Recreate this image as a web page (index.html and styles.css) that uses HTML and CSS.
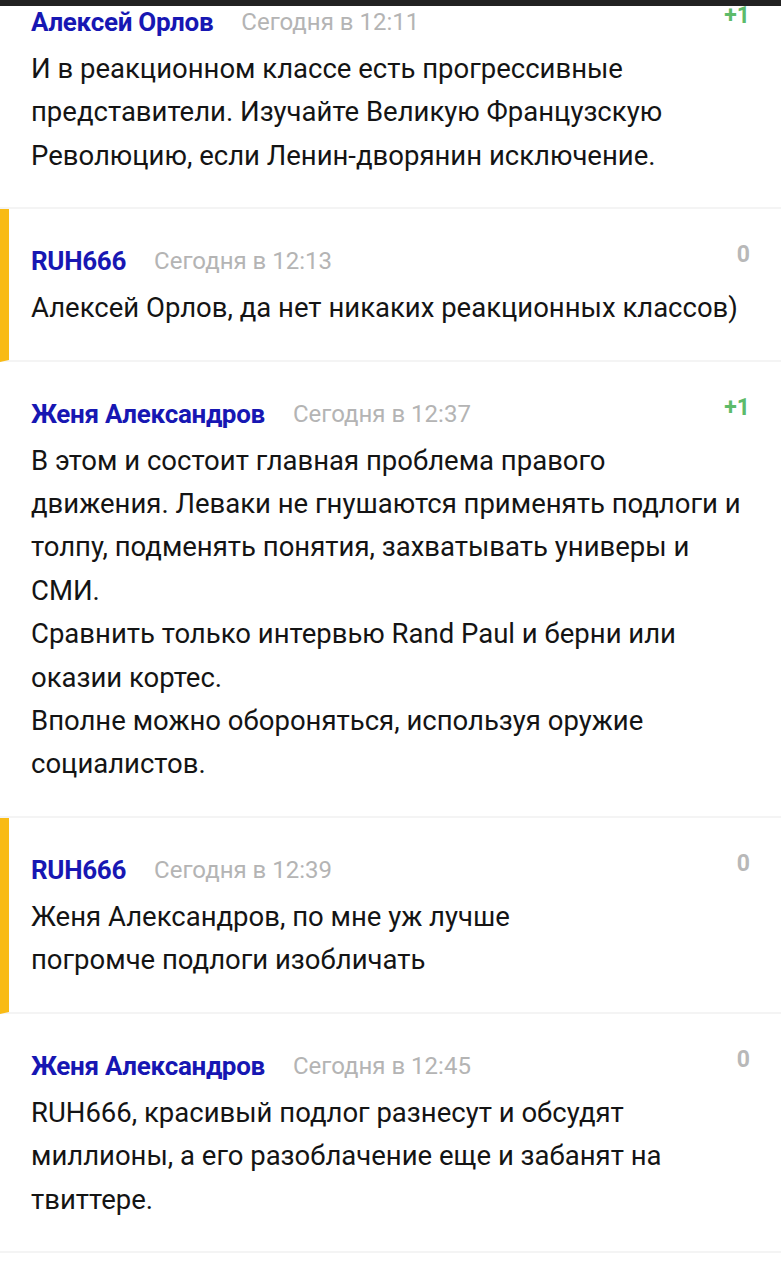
FILE: index.html
```html
<!DOCTYPE html>
<html lang="ru">
<head>
    <meta charset="UTF-8">
    <meta name="viewport" content="width=device-width, initial-scale=1.0">
    <title>Комментарии</title>
    <link rel="stylesheet" href="styles.css">
</head>
<body>
    <div class="topbar"></div>
    <section class="feed">
        <div class="comment">
            <div class="comment-head">
                <span class="author">Алексей Орлов</span>
                <span class="date">Сегодня в 12:11</span>
                <span class="score plus">+1</span>
            </div>
            <p class="comment-text">И в реакционном классе есть прогрессивные<br>представители. Изучайте Великую Французскую<br>Революцию, если Ленин-дворянин исключение.</p>
        </div>
        <div class="comment reply">
            <div class="comment-head">
                <span class="author">RUH666</span>
                <span class="date">Сегодня в 12:13</span>
                <span class="score">0</span>
            </div>
            <p class="comment-text">Алексей Орлов, да нет никаких реакционных классов)</p>
        </div>
        <div class="comment">
            <div class="comment-head">
                <span class="author">Женя Александров</span>
                <span class="date">Сегодня в 12:37</span>
                <span class="score plus">+1</span>
            </div>
            <p class="comment-text">В этом и состоит главная проблема правого<br>движения. Леваки не гнушаются применять подлоги и<br>толпу, подменять понятия, захватывать универы и<br>СМИ.<br>Сравнить только интервью Rand Paul и берни или<br>оказии кортес.<br>Вполне можно обороняться, используя оружие<br>социалистов.</p>
        </div>
        <div class="comment reply">
            <div class="comment-head">
                <span class="author">RUH666</span>
                <span class="date">Сегодня в 12:39</span>
                <span class="score">0</span>
            </div>
            <p class="comment-text">Женя Александров, по мне уж лучше<br>погромче подлоги изобличать</p>
        </div>
        <div class="comment">
            <div class="comment-head">
                <span class="author">Женя Александров</span>
                <span class="date">Сегодня в 12:45</span>
                <span class="score">0</span>
            </div>
            <p class="comment-text">RUH666, красивый подлог разнесут и обсудят<br>миллионы, а его разоблачение еще и забанят на<br>твиттере.</p>
        </div>
    </section>
</body>
</html>
```

FILE: styles.css
```css
* {
    box-sizing: border-box;
    padding: 0;
    margin: 0;
}
body {
    font-family: Roboto, 'Noto Sans', sans-serif;
    background: #fff;
    color: #141414;
}
.topbar {
    height: 6px;
    background: #222;
    position: relative;
    z-index: 2;
}
.feed {
    overflow: hidden;
}
.comment {
    padding: 37px 20px 30px 31px;
    border-bottom: 2px solid #f4f4f4;
}
.feed .comment:first-child {
    margin-top: -36px;
}
.comment.reply {
    border-left: 9px solid #f9bb15;
    padding-left: 22px;
}
.comment-head {
    display: flex;
    align-items: flex-start;
    height: 30px;
    line-height: 30px;
}
.author {
    font-size: 26px;
    font-weight: 700;
    color: #1717b3;
    letter-spacing: -0.3px;
}
.date {
    font-size: 24px;
    color: #b4b4b4;
    margin-left: 28px;
}
.score {
    margin-left: auto;
    margin-right: 11px;
    font-size: 23px;
    font-weight: 700;
    color: #b8b8b8;
    line-height: 18px;
}
.score.plus {
    color: #5dbb6a;
}
.comment-text {
    margin-top: 10px;
    font-size: 27.5px;
    line-height: 43.4px;
    white-space: nowrap;
}
```
